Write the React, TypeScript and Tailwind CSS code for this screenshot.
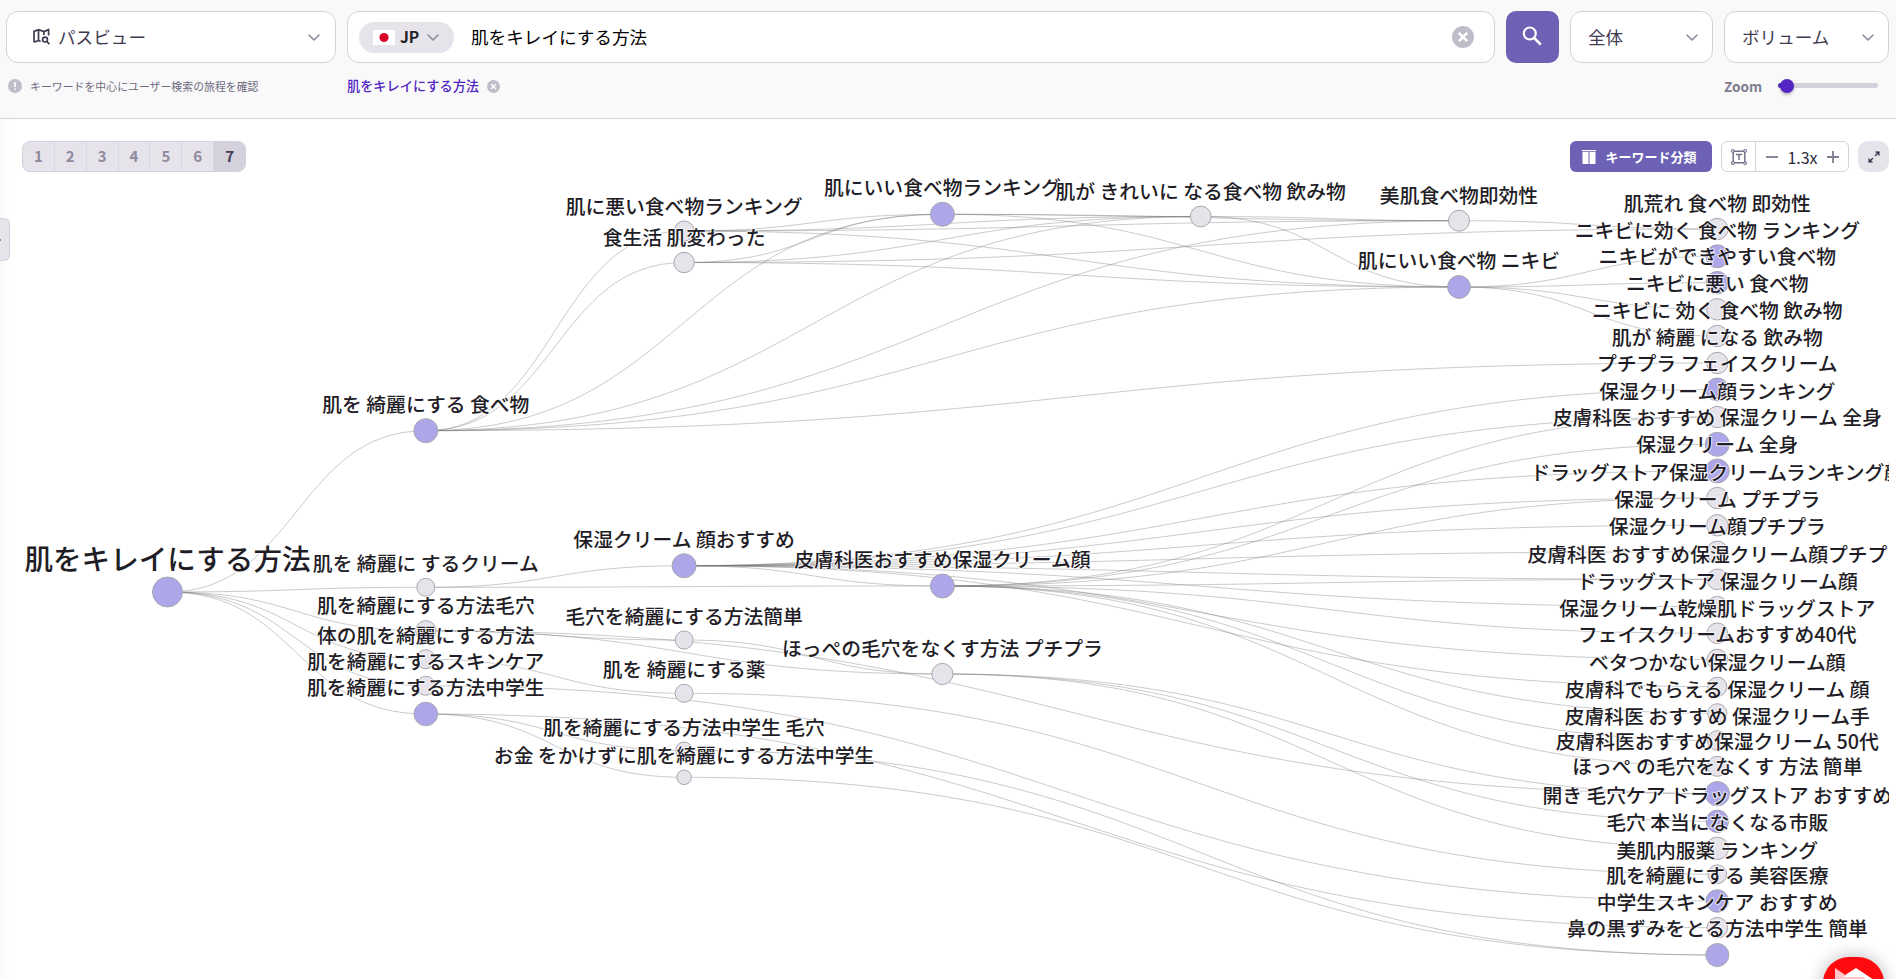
import React from 'react';

const COLS = [167.5, 425.8, 684.1, 942.4, 1200.7, 1459, 1717.3];

type GraphNode = { id: string; col: number; y: number; r: number; hot: boolean; label: string };

const n = (id: string, col: number, y: number, r: number, hot: boolean, label: string): GraphNode => ({ id, col, y, r, hot, label });

const NODES: GraphNode[] = [
  n('root', 0, 592, 15, true, '肌をキレイにする方法'),
  n('a1', 1, 430.7, 12, true, '肌を 綺麗にする 食べ物'),
  n('a2', 1, 587.3, 9, false, '肌を 綺麗に するクリーム'),
  n('a3', 1, 630.8, 10.2, false, '肌を綺麗にする方法毛穴'),
  n('a4', 1, 659.2, 9.5, false, '体の肌を綺麗にする方法'),
  n('a5', 1, 685.8, 9.5, false, '肌を綺麗にするスキンケア'),
  n('a6', 1, 714, 11.8, true, '肌を綺麗にする方法中学生'),
  n('b1', 2, 231, 10, false, '肌に悪い食べ物ランキング'),
  n('b2', 2, 262.5, 10.2, false, '食生活 肌変わった'),
  n('b3', 2, 565.7, 12, true, '保湿クリーム 顔おすすめ'),
  n('b4', 2, 640, 9, false, '毛穴を綺麗にする方法簡単'),
  n('b5', 2, 693.3, 9, false, '肌を 綺麗にする薬'),
  n('b6', 2, 750.3, 8.3, false, '肌を綺麗にする方法中学生 毛穴'),
  n('b7', 2, 777.3, 7.3, false, 'お金 をかけずに肌を綺麗にする方法中学生'),
  n('c1', 3, 214.3, 12, true, '肌にいい食べ物ランキング'),
  n('c2', 3, 586, 12, true, '皮膚科医おすすめ保湿クリーム顔'),
  n('c3', 3, 674, 10.6, false, 'ほっぺの毛穴をなくす方法 プチプラ'),
  n('d1', 4, 216.5, 10.4, false, '肌が きれいに なる食べ物 飲み物'),
  n('e1', 5, 220.7, 10.5, false, '美肌食べ物即効性'),
  n('e2', 5, 287, 11.4, true, '肌にいい食べ物 ニキビ'),
  n('f1', 6, 229, 10.7, false, '肌荒れ 食べ物 即効性'),
  n('f2', 6, 256.3, 11.5, true, 'ニキビに効く 食べ物 ランキング'),
  n('f3', 6, 282.7, 11.3, true, 'ニキビができやすい食べ物'),
  n('f4', 6, 309.3, 10.7, false, 'ニキビに悪い 食べ物'),
  n('f5', 6, 336, 10.7, false, 'ニキビに 効く 食べ物 飲み物'),
  n('f6', 6, 363, 10.7, false, '肌が 綺麗 になる 飲み物'),
  n('f7', 6, 389.5, 11.5, true, 'プチプラ フェイスクリーム'),
  n('f8', 6, 417, 10.7, false, '保湿クリーム顔ランキング'),
  n('f9', 6, 444.3, 12, true, '皮膚科医 おすすめ 保湿クリーム 全身'),
  n('f10', 6, 471, 12, true, '保湿クリーム 全身'),
  n('f11', 6, 498, 10.7, false, 'ドラッグストア保湿クリームランキング顔'),
  n('f12', 6, 525.3, 10.7, false, '保湿 クリーム プチプラ'),
  n('f13', 6, 551.8, 10.7, false, '保湿クリーム顔プチプラ'),
  n('f14', 6, 579.3, 10.3, false, '皮膚科医 おすすめ保湿クリーム顔プチプラ'),
  n('f15', 6, 606.7, 10.3, false, 'ドラッグストア 保湿クリーム顔'),
  n('f16', 6, 633.3, 10.3, false, '保湿クリーム乾燥肌ドラッグストア'),
  n('f17', 6, 659.5, 10.3, false, 'フェイスクリームおすすめ40代'),
  n('f18', 6, 686.7, 9.6, false, 'ベタつかない保湿クリーム顔'),
  n('f19', 6, 713.3, 9.6, false, '皮膚科でもらえる 保湿クリーム 顔'),
  n('f20', 6, 740.5, 9.8, false, '皮膚科医 おすすめ 保湿クリーム手'),
  n('f21', 6, 766.3, 10, false, '皮膚科医おすすめ保湿クリーム 50代'),
  n('f22', 6, 793.7, 12.2, true, 'ほっぺ の毛穴をなくす 方法 簡単'),
  n('f23', 6, 821.3, 11.2, true, '開き 毛穴ケア ドラッグストア おすすめ'),
  n('f24', 6, 848.3, 11.2, false, '毛穴 本当になくなる市販'),
  n('f25', 6, 874.3, 9.4, false, '美肌内服薬 ランキング'),
  n('f26', 6, 901, 11.3, true, '肌を綺麗にする 美容医療'),
  n('f27', 6, 927.7, 10.3, false, '中学生スキンケア おすすめ'),
  n('f28', 6, 955, 11.5, true, '鼻の黒ずみをとる方法中学生 簡単'),
];

const EDGES: Record<string, string[]> = {
  root: ['a1', 'a2', 'a3', 'a4', 'a5', 'a6'],
  a1: ['b1', 'b2', 'c1', 'd1', 'e1', 'e2', 'f6'],
  a2: ['b3', 'c2'],
  a3: ['b4', 'c3', 'f22'],
  a4: ['b5'],
  a5: ['f26'],
  a6: ['b6', 'b7', 'f27'],
  b1: ['c1', 'd1', 'e1', 'e2'],
  b2: ['c1', 'd1', 'f1', 'e2'],
  b3: ['c2', 'f7', 'f8', 'f10', 'f11', 'f12', 'f13', 'f14', 'f15', 'f17', 'f18'],
  b4: ['c3'],
  b5: ['f25'],
  b6: ['f28'],
  b7: ['f28'],
  c1: ['d1', 'e1', 'e2'],
  c2: ['f8', 'f9', 'f11', 'f14', 'f16', 'f19', 'f20', 'f21'],
  c3: ['f22', 'f23', 'f24'],
  d1: ['e1', 'e2'],
  e1: ['f1'],
  e2: ['f2', 'f3', 'f4', 'f5'],
};

const byId = new Map(NODES.map((node) => [node.id, node]));

// The canvas starts below the header, which is 119px tall.
const TOP = 119;

function curve(from: GraphNode, to: GraphNode) {
  const x0 = COLS[from.col];
  const x1 = COLS[to.col];
  const mid = (x0 + x1) / 2;
  return `M${x0},${from.y - TOP}C${mid},${from.y - TOP} ${mid},${to.y - TOP} ${x1},${to.y - TOP}`;
}

function PathGraph() {
  return (
    <svg className="block h-[860px] w-[1889px]" viewBox="0 0 1889 860" fill="none">
      <g stroke="#77757c" strokeOpacity="0.38" strokeWidth="1">
        {Object.entries(EDGES).flatMap(([from, targets]) =>
          targets.map((to) => <path key={`${from}-${to}`} d={curve(byId.get(from)!, byId.get(to)!)} />),
        )}
      </g>
      <g stroke="#a9a7ad" strokeWidth="1">
        {NODES.map((node) => (
          <circle key={node.id} cx={COLS[node.col]} cy={node.y - TOP} r={node.r} fill={node.hot ? '#ada7ea' : '#e6e3eb'} />
        ))}
      </g>
      <g fill="#1f1d26" stroke="#ffffff" strokeOpacity="0.75" strokeWidth="2" strokeLinejoin="round" textAnchor="middle" className="font-medium [paint-order:stroke]">
        {NODES.map((node) => {
          const big = node.col === 0;
          return (
            <text
              key={node.id}
              x={COLS[node.col]}
              y={node.y - TOP - node.r - (big ? 7.2 : 7.2)}
              className={big ? 'text-[28.6px]' : 'text-[19.8px]'}
            >
              {node.label}
            </text>
          );
        })}
      </g>
    </svg>
  );
}

function Chevron() {
  return (
    <svg className="h-[7px] w-3 shrink-0" viewBox="0 0 12 7" fill="none" stroke="#8a8699" strokeWidth="1.5" strokeLinecap="round" strokeLinejoin="round">
      <path d="M1 1l5 5 5-5" />
    </svg>
  );
}

function Clear({ className }: { className: string }) {
  return (
    <svg className={className} viewBox="0 0 22 22">
      <circle cx="11" cy="11" r="11" fill="#c0bcca" />
      <path d="M6.8 6.8l8.4 8.4M15.2 6.8l-8.4 8.4" stroke="#fff" strokeWidth="2.6" />
    </svg>
  );
}

function Header() {
  return (
    <header className="h-[119px] border-b border-[#d4d1dd] bg-[#f9f9f9] pt-[11px] pr-[7px] pl-[6px]">
      <div className="flex h-[52px]">
        <div className="flex w-[330px] items-center rounded-xl border border-[#d4d1dd] bg-white pr-[15px] pl-[26px]">
          <svg className="-mt-0.5 h-[17px] w-[17px]" viewBox="0 0 17 17" fill="none" stroke="#3f3b52" strokeWidth="1.7">
            <path d="M1 14.2V3.4L5.5 1.6 11 3.6 15.6 1.6V7.5M1 14.2L5.5 12.4 7.6 13.4M5.5 1.6V12.4M11 3.6V7" />
            <circle cx="12" cy="11.6" r="2.4" />
            <path d="M13.7 13.4L16.4 16.2" />
          </svg>
          <span className="ml-[8px] grow text-[17.6px] text-[#3f3b52]">パスビュー</span>
          <Chevron />
        </div>
        <div className="ml-[11px] flex w-[1148px] items-center rounded-xl border border-[#d4d1dd] bg-white pr-[20px] pl-[11px]">
          <div className="flex h-[31px] w-[95px] items-center rounded-full bg-[#e6e3eb] pl-[14px]">
            <svg className="h-[15px] w-[22px]" viewBox="0 0 22 15">
              <rect width="22" height="15" fill="#fff" />
              <circle cx="11" cy="7.5" r="4.6" fill="#d80027" />
            </svg>
            <span className="mr-[9px] ml-[5px] w-[18px] text-[15.6px] font-bold text-[#1f1d26]">JP</span>
            <Chevron />
          </div>
          <span className="ml-[17px] grow text-[17.6px] text-black">肌をキレイにする方法</span>
          <Clear className="h-[22px] w-[22px]" />
        </div>
        <button className="ml-[11px] flex w-[53px] items-center justify-center rounded-[10px] bg-[#6c61b5]">
          <svg className="-mt-0.5 -ml-0.5 h-[20px] w-[20px]" viewBox="0 0 20 20" fill="none" stroke="#fff" strokeWidth="2.2">
            <circle cx="7.8" cy="7.5" r="6" />
            <path d="M12.2 12l6.6 6.6" strokeWidth="2.6" />
          </svg>
        </button>
        <div className="ml-[11px] flex w-[143px] items-center justify-between rounded-xl border border-[#d4d1dd] bg-white pr-[14px] pl-[17px] text-[17.6px] text-[#3f3b52]">
          全体
          <Chevron />
        </div>
        <div className="ml-[11px] flex w-[165px] items-center justify-between rounded-xl border border-[#d4d1dd] bg-white pr-[14px] pl-[17px] text-[17.6px] text-[#3f3b52]">
          ボリューム
          <Chevron />
        </div>
      </div>
      <div className="mt-[12px] flex h-[22px] items-center">
        <div className="flex w-[341px] items-center pl-[2px]">
          <svg className="h-[14px] w-[14px]" viewBox="0 0 14 14">
            <circle cx="7" cy="7" r="7" fill="#c0bcca" />
            <path d="M7 3v5M7 9.4v1.6" stroke="#fff" strokeWidth="1.6" />
          </svg>
          <span className="ml-[8px] text-[10.9px] text-[#6e6a80]">キーワードを中心にユーザー検索の旅程を確認</span>
        </div>
        <span className="text-[13.2px] font-medium text-[#5325c3]">肌をキレイにする方法</span>
        <Clear className="ml-[8px] h-[13px] w-[13px]" />
        <div className="ml-auto flex items-center">
          <span className="w-[54px] text-[13.6px] font-bold text-[#7f7b90]">Zoom</span>
          <div className="mr-[11px] flex h-[5px] w-[100px] items-center rounded-full bg-[#d4d1dd]">
            <div className="h-[5px] w-[5px] rounded-l-full bg-[#5325c3]" />
            <div className="-ml-[3px] h-[14px] w-[14px] rounded-full bg-[#5325c3] shadow-[0_2px_3px_rgba(0,0,0,0.25)]" />
          </div>
        </div>
      </div>
    </header>
  );
}

function Pager() {
  return (
    <div className="flex h-[31px] w-[224px] overflow-hidden rounded-lg border border-[#d4d1dd] bg-[#e6e3eb] text-[15px] font-bold text-[#8e8a9e]">
      {[1, 2, 3, 4, 5, 6].map((step) => (
        <span key={step} className="flex flex-1 items-center justify-center border-r border-[#d9d6e1]">
          {step}
        </span>
      ))}
      <span className="flex flex-1 items-center justify-center bg-[#d4d1dd] text-[#3f3b52]">7</span>
    </div>
  );
}

function Toolbar() {
  return (
    <div className="flex h-[31px]">
      <button className="flex w-[142px] items-center rounded-md bg-[#6c61b5] pl-[12px]">
        <svg className="h-[14px] w-[14px]" viewBox="0 0 14 14" fill="#fff">
          <path d="M0 0h14v1.2H0zM.5 2h6v12h-6zM7.5 2h6v12h-6z" />
        </svg>
        <span className="ml-[9.5px] text-[13px] font-bold text-white">キーワード分類</span>
      </button>
      <div className="ml-[9px] flex w-[128px] rounded-md border border-[#d4d1dd] bg-white">
        <div className="flex w-[34px] items-center justify-center border-r border-[#d4d1dd]">
          <svg className="h-4 w-4" viewBox="0 0 16 16" fill="none" stroke="#75718a" strokeWidth="1">
            <path d="M2.2 2.2h11.6v11.6H2.2zM4.8 5.4h6.4M8 5.4V11" strokeWidth="1.5" />
            <path d="M.7.7h2.4v2.4H.7zM12.9.7h2.4v2.4h-2.4zM.7 12.9h2.4v2.4H.7zM12.9 12.9h2.4v2.4h-2.4z" fill="#fff" />
          </svg>
        </div>
        <div className="flex grow items-center justify-between pr-[9px] pl-[10px]">
          <svg className="h-3 w-3" viewBox="0 0 12 12" stroke="#7f7b90" strokeWidth="1.8">
            <path d="M0 6h12" />
          </svg>
          <span className="text-[16px] text-[#2d2a3a]">1.3x</span>
          <svg className="h-3 w-3" viewBox="0 0 12 12" stroke="#7f7b90" strokeWidth="1.8">
            <path d="M0 6h12M6 0v12" />
          </svg>
        </div>
      </div>
      <button className="ml-[9px] flex w-[31px] items-center justify-center rounded-[10px] bg-[#e6e3eb]">
        <svg className="h-3 w-3" viewBox="0 0 12 12" fill="#3f3b52" stroke="#3f3b52" strokeWidth="1.3">
          <path d="M11.2.8L7 5M.8 11.2L5 7" />
          <path d="M7.4.8h3.8v3.8zM.8 7.4v3.8h3.8z" strokeWidth="0.6" />
        </svg>
      </button>
    </div>
  );
}

export default function App() {
  return (
    <div className="h-[979px] w-[1896px] overflow-hidden bg-white font-['Noto_Sans_CJK_JP','Noto_Sans',sans-serif]">
      <Header />
      <main className="relative h-[860px] overflow-hidden">
        <PathGraph />
        <div className="absolute inset-y-0 left-0 w-3 bg-linear-to-r from-black/2 to-transparent" />
        <div className="absolute inset-x-0 top-[22px] flex justify-between pr-[7px] pl-[22px]">
          <Pager />
          <Toolbar />
        </div>
        <div className="absolute top-[99px] left-0 flex h-[43px] w-[10px] items-center rounded-r-md border border-l-0 border-[#d4d1dd] bg-[#e6e3eb]">
          <span className="h-0.5 w-px bg-[#8e8a9e]" />
        </div>
        <div className="absolute top-[838px] left-[1823px] h-[61px] w-[61px] overflow-hidden rounded-[26px] bg-[#ff0a0f] shadow-[0_0_18px_rgba(0,0,0,0.28)]">
          <svg className="h-[61px] w-[61px]" viewBox="0 0 61 61">
            <path d="M16 22L33 11 49.500 22V46H16z" fill="#fff" />
            <path d="M12 11L23 18.500 21 20H40L46 24H12z" fill="#ffc4c8" />
          </svg>
        </div>
      </main>
    </div>
  );
}
